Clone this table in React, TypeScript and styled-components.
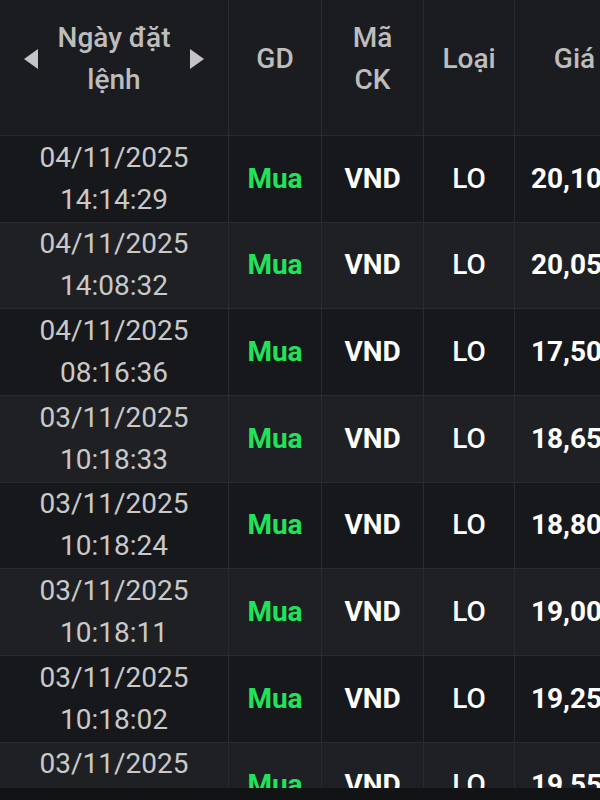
import styled, { createGlobalStyle } from "styled-components";

const GlobalStyle = createGlobalStyle`
  html, body {
    margin: 0;
    padding: 0;
    background: #17181b;
  }
  body {
    font-family: Roboto, "Liberation Sans", sans-serif;
  }
`;

const Screen = styled.div`
  position: relative;
  width: 600px;
  height: 800px;
  overflow: hidden;
  background: #17181b;
`;

const Scroller = styled.div`
  height: 788px;
  overflow: hidden;
`;

const Table = styled.div`
  display: grid;
  grid-template-columns: 229px 93px 102px 91px 120px;
  width: 635px;
`;

const HeadCell = styled.div`
  display: flex;
  align-items: center;
  justify-content: center;
  gap: 20px;
  height: 136px;
  padding-bottom: 17px;
  box-sizing: border-box;
  background: #1b1c1f;
  border-right: 1px solid #2a2b2f;
  border-bottom: 1px solid #2a2b2f;
  color: #bdbdbd;
  font-size: 28px;
  font-weight: 500;
  line-height: 42px;
  text-align: center;
  white-space: nowrap;
`;

const HeadLabel = styled.span`
  display: block;
`;

const Arrow = styled.span<{ $dir: "left" | "right" }>`
  width: 0;
  height: 0;
  border-top: 10px solid transparent;
  border-bottom: 10px solid transparent;
  ${(p) =>
    p.$dir === "left"
      ? "border-right: 14px solid #c4c4c4;"
      : "border-left: 14px solid #c4c4c4;"}
`;

const Cell = styled.div<{ $alt: boolean }>`
  display: flex;
  align-items: center;
  justify-content: center;
  height: 86.67px;
  box-sizing: border-box;
  background: ${(p) => (p.$alt ? "#1f2023" : "#17181b")};
  border-right: 1px solid #2a2b2f;
  border-bottom: 1px solid #2a2b2f;
  font-size: 28px;
  line-height: 42px;
  text-align: center;
  white-space: nowrap;
`;

const DateText = styled.div`
  color: #c9c9c9;
  font-weight: 400;
`;

const Side = styled.span`
  color: #21e35a;
  font-weight: 700;
`;

const Strong = styled.span`
  color: #ffffff;
  font-weight: 700;
`;

const Plain = styled.span`
  color: #ffffff;
  font-weight: 500;
`;

const Footer = styled.div`
  height: 12px;
  background: #121315;
  box-shadow: 0 -2px 4px rgba(0, 0, 0, 0.35);
`;

const orders = [
  { date: "04/11/2025", time: "14:14:29", price: "20,100" },
  { date: "04/11/2025", time: "14:08:32", price: "20,050" },
  { date: "04/11/2025", time: "08:16:36", price: "17,500" },
  { date: "03/11/2025", time: "10:18:33", price: "18,650" },
  { date: "03/11/2025", time: "10:18:24", price: "18,800" },
  { date: "03/11/2025", time: "10:18:11", price: "19,000" },
  { date: "03/11/2025", time: "10:18:02", price: "19,250" },
  { date: "03/11/2025", time: "10:17:50", price: "19,550" },
];

export default function App() {
  return (
    <Screen>
      <GlobalStyle />
      <Scroller>
        <Table>
          <HeadCell>
            <Arrow $dir="left" />
            <HeadLabel>
              Ngày đặt
              <br />
              lệnh
            </HeadLabel>
            <Arrow $dir="right" />
          </HeadCell>
          <HeadCell>GD</HeadCell>
          <HeadCell>
            <HeadLabel>
              Mã
              <br />
              CK
            </HeadLabel>
          </HeadCell>
          <HeadCell>Loại</HeadCell>
          <HeadCell>Giá</HeadCell>
          {orders.map((o, i) => {
            const alt = i % 2 === 1;
            return [
              <Cell $alt={alt} key={`d${i}`}>
                <DateText>
                  {o.date}
                  <br />
                  {o.time}
                </DateText>
              </Cell>,
              <Cell $alt={alt} key={`s${i}`}>
                <Side>Mua</Side>
              </Cell>,
              <Cell $alt={alt} key={`c${i}`}>
                <Strong>VND</Strong>
              </Cell>,
              <Cell $alt={alt} key={`t${i}`}>
                <Plain>LO</Plain>
              </Cell>,
              <Cell $alt={alt} key={`p${i}`}>
                <Strong>{o.price}</Strong>
              </Cell>,
            ];
          })}
        </Table>
      </Scroller>
      <Footer />
    </Screen>
  );
}
